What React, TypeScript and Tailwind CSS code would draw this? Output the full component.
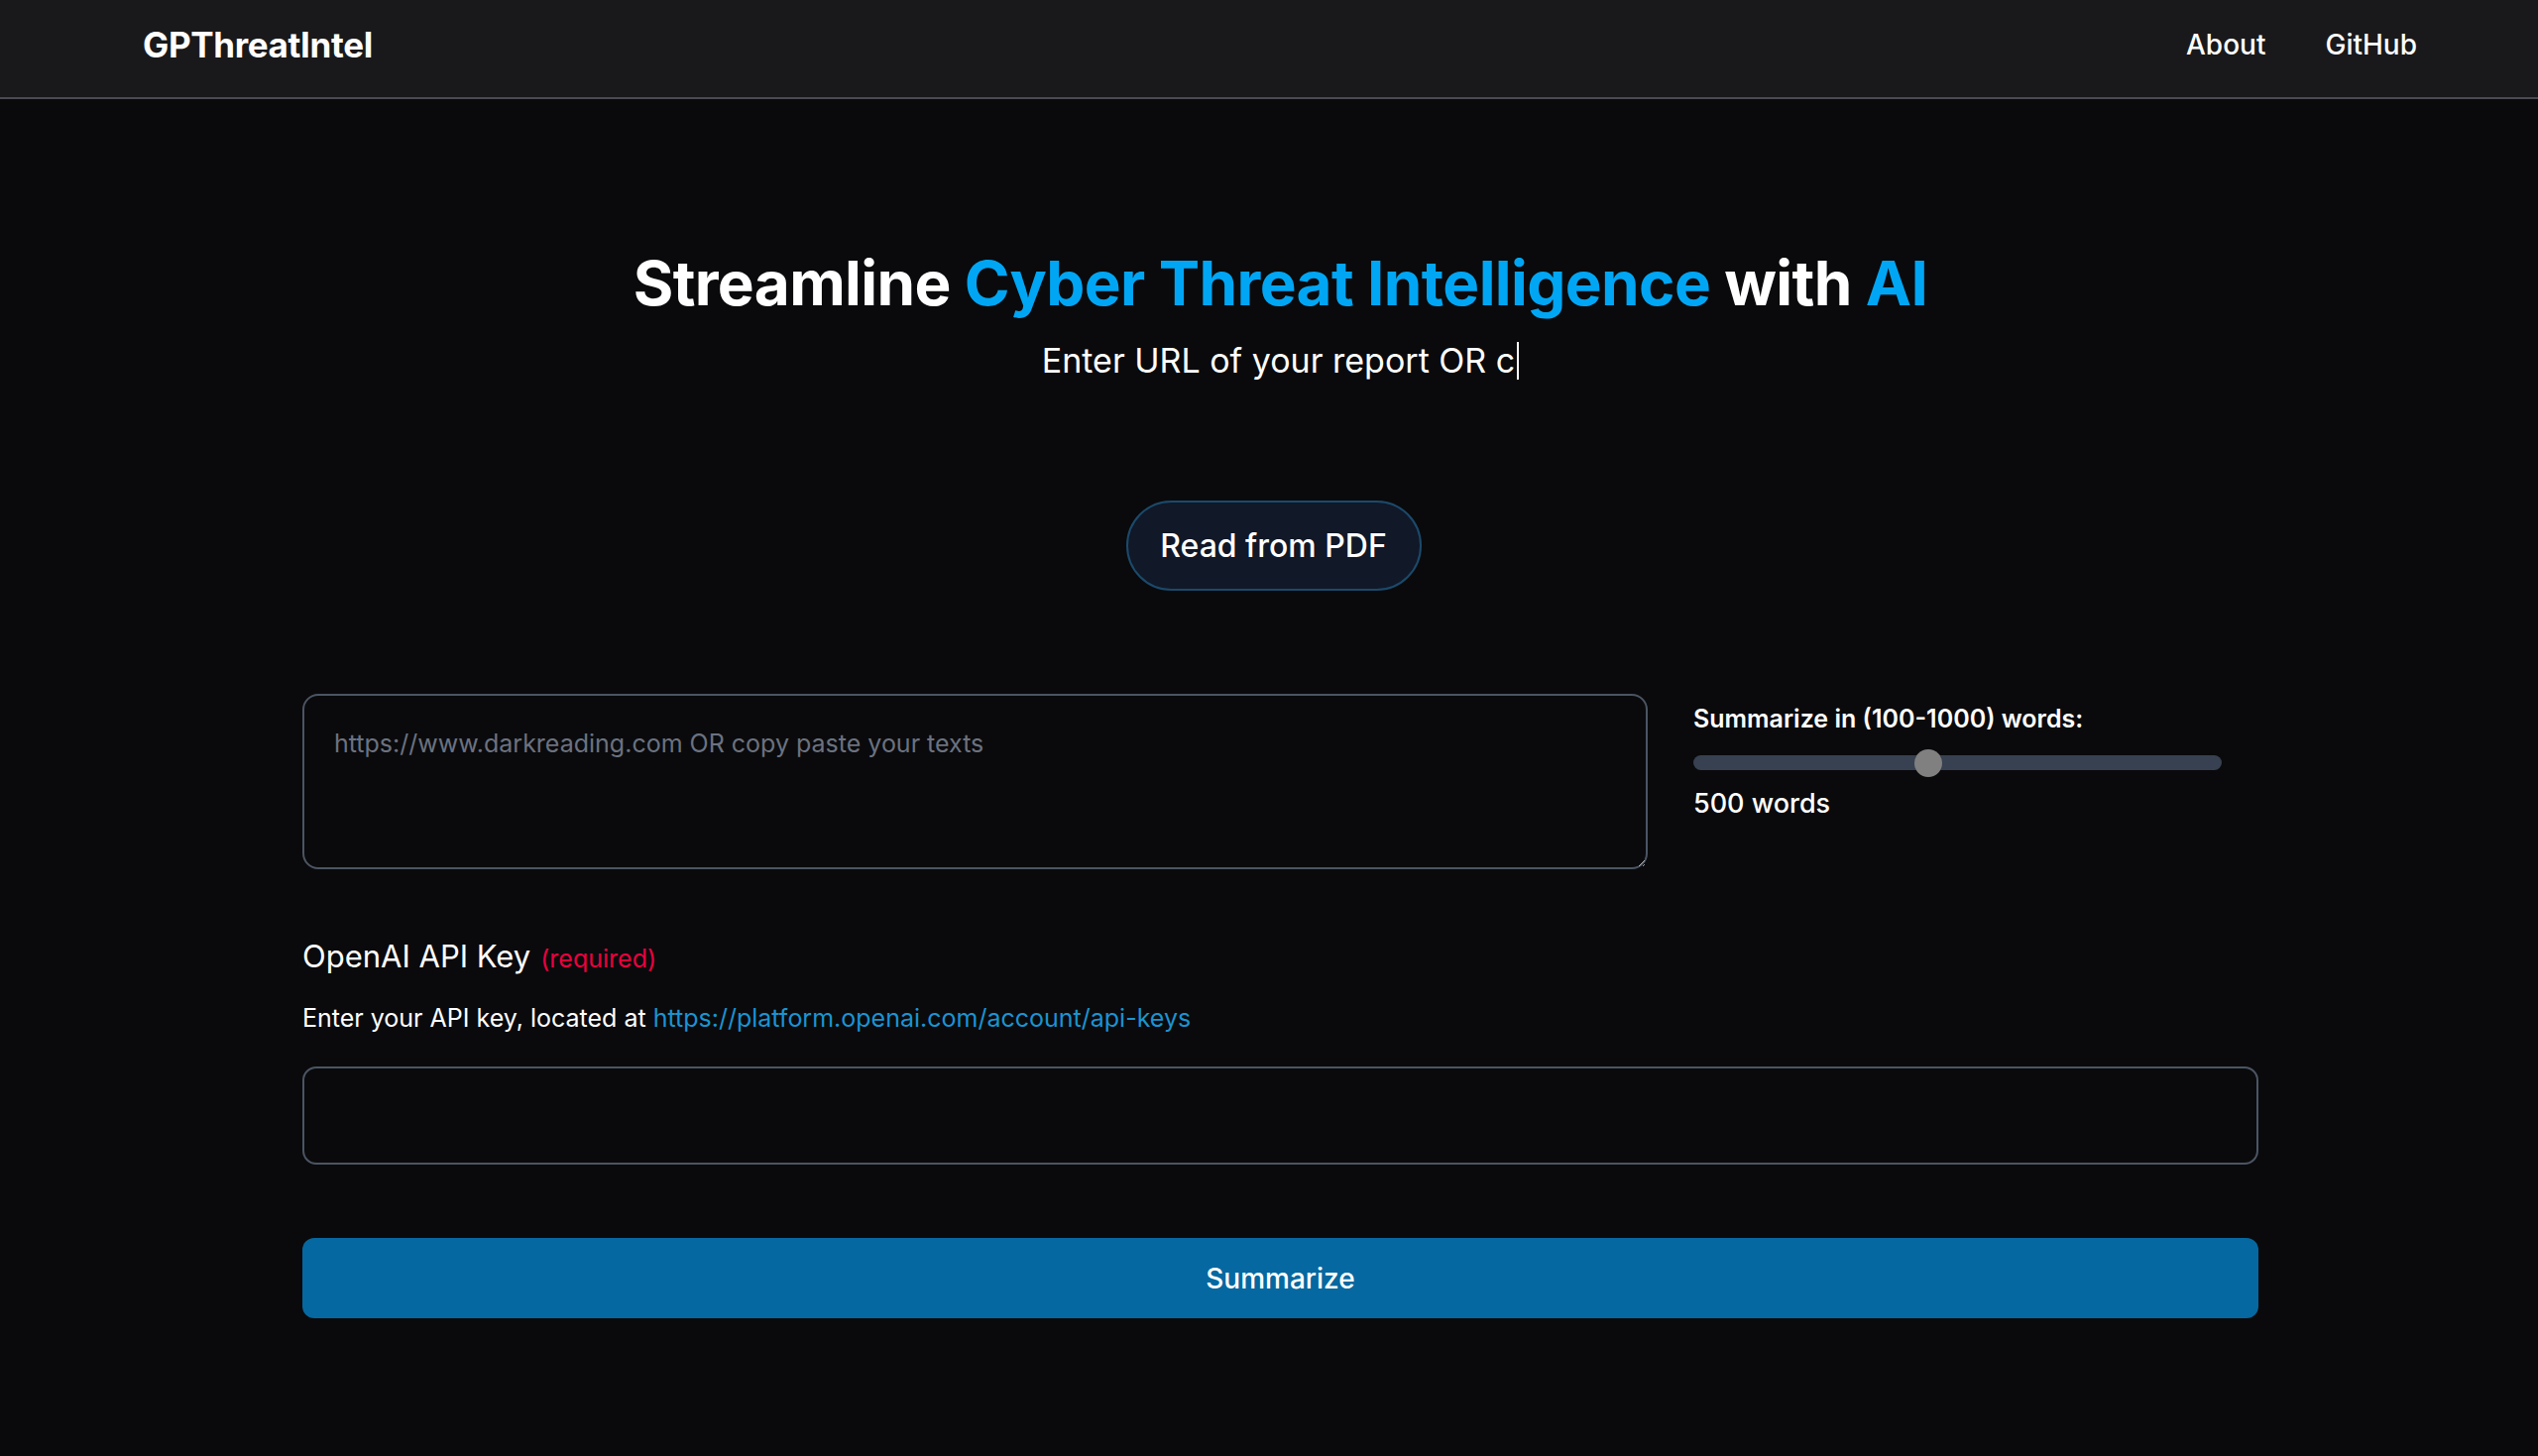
import React, { useState } from 'react';

const MIN_WORDS = 100;
const MAX_WORDS = 1000;

function WordSlider({ value }: { value: number }) {
  const pct = ((value - MIN_WORDS) / (MAX_WORDS - MIN_WORDS)) * 100;
  return (
    <div className="relative h-[15px] w-full rounded-full bg-[#374151]">
      <div
        className="absolute top-1/2 h-[28px] w-[28px] -translate-x-1/2 -translate-y-1/2 rounded-full bg-[#808080]"
        style={{ left: `${pct}%` }}
      />
    </div>
  );
}

export default function App() {
  const [words] = useState(500);

  return (
    <div className="min-h-screen bg-[#0a0a0c] font-[Inter,sans-serif] text-white">
      {/* Header */}
      <header className="flex h-[100px] items-center justify-between border-b-2 border-[#4a4a52] bg-[#19191b] pb-[8px] pl-[144px] pr-[122px]">
        <a className="text-[35px] font-bold leading-none tracking-[-0.01em]">GPThreatIntel</a>
        <nav className="flex items-center gap-[60px] text-[28px] font-medium leading-none">
          <a>About</a>
          <a>GitHub</a>
        </nav>
      </header>

      <main className="pl-[305px] pr-[282px] pb-[140px]">
        {/* Hero */}
        <div className="flex flex-col items-center pt-[155px]">
          <h1 className="text-[62px] font-bold leading-none tracking-[-0.01em]">
            Streamline <span className="text-sky-500">Cyber Threat Intelligence</span> with{' '}
            <span className="text-sky-500">AI</span>
          </h1>
          <p className="mt-[28px] flex items-center text-[34px] leading-none">
            Enter URL of your report OR c
            <span className="ml-[2px] inline-block h-[38px] w-[2px] bg-white" />
          </p>
          <button className="mr-[14px] mt-[122px] h-[91px] w-[298px] rounded-full border-2 border-[#1b4a6b] bg-[#111827] text-[32px] font-medium leading-none">
            Read from PDF
          </button>
        </div>

        {/* URL / text + slider */}
        <div className="mt-[104px] flex gap-[46px]">
          <textarea
            className="h-[177px] w-[1357px] rounded-[16px] border-2 border-[#4b5563] bg-transparent px-[30px] pt-[32px] text-[25px] leading-[1.3] outline-none placeholder:text-[#6b7280]"
            placeholder="https://www.darkreading.com OR copy paste your texts"
          />
          <div className="flex w-[533px] flex-col pt-[13px]">
            <label className="text-[25px] font-semibold leading-none">Summarize in (100-1000) words:</label>
            <div className="mt-[24px]">
              <WordSlider value={words} />
            </div>
            <span className="mt-[20px] text-[27px] font-medium leading-none">{words} words</span>
          </div>
        </div>

        {/* API key */}
        <div className="mt-[72px] flex items-baseline gap-[10px]">
          <span className="text-[31px] leading-none">OpenAI API Key</span>
          <span className="text-[25px] leading-none text-rose-600">(required)</span>
        </div>
        <p className="mt-[35px] text-[25px] leading-none">
          Enter your API key, located at{' '}
          <a className="text-[#1b93d1]">https://platform.openai.com/account/api-keys</a>
        </p>
        <input
          type="password"
          className="mt-[36px] block h-[99px] w-full rounded-[14px] border-2 border-[#4b5563] bg-transparent px-[30px] text-[28px] outline-none"
        />

        <button className="mt-[74px] flex h-[81px] w-full items-center justify-center rounded-[12px] bg-[#0668a0] text-[28px] font-medium leading-none">
          Summarize
        </button>
      </main>
    </div>
  );
}
